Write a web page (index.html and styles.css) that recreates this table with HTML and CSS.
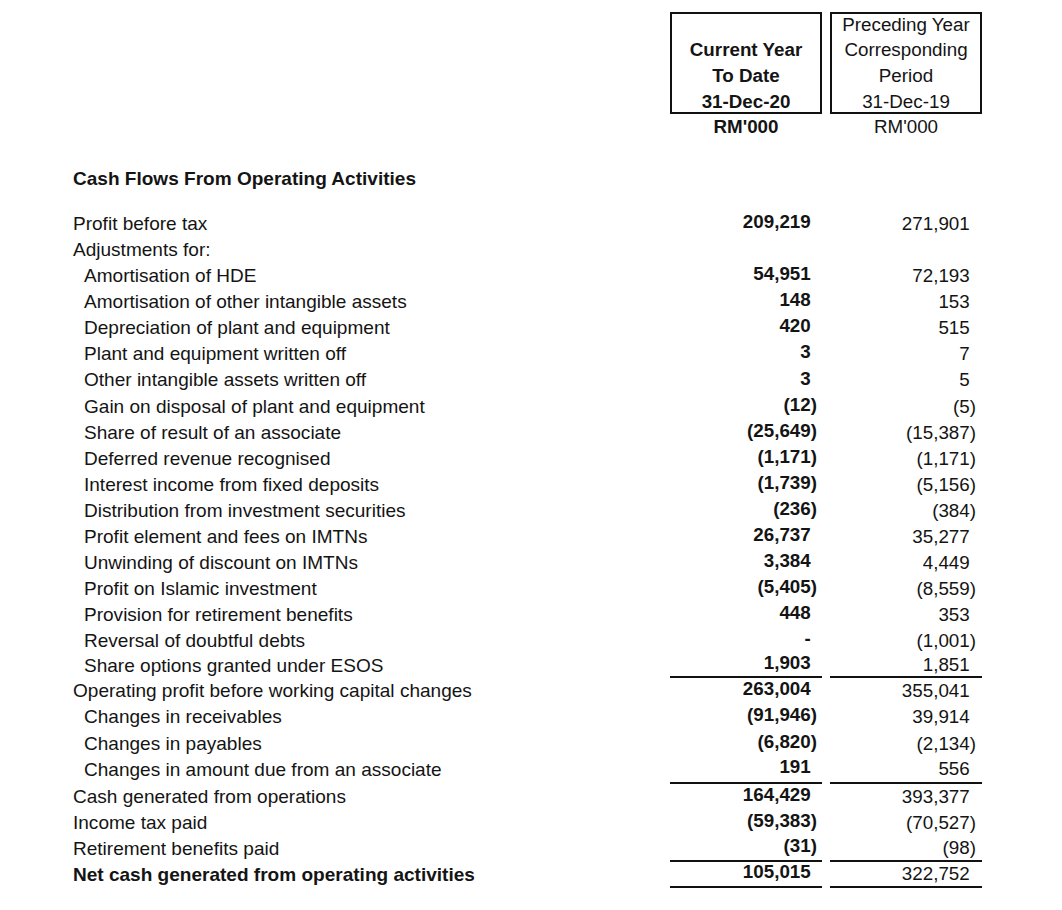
FILE: index.html
```html
<!DOCTYPE html>
<html lang="en">
<head>
<meta charset="utf-8">
<title>Cash Flows From Operating Activities</title>
<link rel="stylesheet" href="styles.css">
</head>
<body>
<div class="sheet">
  <div class="grid head">
    <div></div>
    <div class="box bold">
      <div class="box-in"><span>Current Year</span><span>To Date</span><span>31-Dec-20</span></div>
    </div>
    <div class="box">
      <div class="box-in"><span>Preceding Year</span><span>Corresponding</span><span>Period</span><span>31-Dec-19</span></div>
    </div>
  </div>
  <div class="grid unit">
    <div></div>
    <div class="bold center">RM'000</div>
    <div class="center">RM'000</div>
  </div>

  <div class="grid heading">
    <div class="bold lab">Cash Flows From Operating Activities</div>
  </div>

  <div class="rows">
    <div class="grid row"><div class="lab">Profit before tax</div><div class="c1 pos">209,219</div><div class="c2 pos">271,901</div></div>
    <div class="grid row"><div class="lab">Adjustments for:</div><div class="c1"></div><div class="c2"></div></div>
    <div class="grid row"><div class="lab ind">Amortisation of HDE</div><div class="c1 pos">54,951</div><div class="c2 pos">72,193</div></div>
    <div class="grid row"><div class="lab ind">Amortisation of other intangible assets</div><div class="c1 pos">148</div><div class="c2 pos">153</div></div>
    <div class="grid row"><div class="lab ind">Depreciation of plant and equipment</div><div class="c1 pos">420</div><div class="c2 pos">515</div></div>
    <div class="grid row"><div class="lab ind">Plant and equipment written off</div><div class="c1 pos">3</div><div class="c2 pos">7</div></div>
    <div class="grid row"><div class="lab ind">Other intangible assets written off</div><div class="c1 pos">3</div><div class="c2 pos">5</div></div>
    <div class="grid row"><div class="lab ind">Gain on disposal of plant and equipment</div><div class="c1">(12)</div><div class="c2">(5)</div></div>
    <div class="grid row"><div class="lab ind">Share of result of an associate</div><div class="c1">(25,649)</div><div class="c2">(15,387)</div></div>
    <div class="grid row"><div class="lab ind">Deferred revenue recognised</div><div class="c1">(1,171)</div><div class="c2">(1,171)</div></div>
    <div class="grid row"><div class="lab ind">Interest income from fixed deposits</div><div class="c1">(1,739)</div><div class="c2">(5,156)</div></div>
    <div class="grid row"><div class="lab ind">Distribution from investment securities</div><div class="c1">(236)</div><div class="c2">(384)</div></div>
    <div class="grid row"><div class="lab ind">Profit element and fees on IMTNs</div><div class="c1 pos">26,737</div><div class="c2 pos">35,277</div></div>
    <div class="grid row"><div class="lab ind">Unwinding of discount on IMTNs</div><div class="c1 pos">3,384</div><div class="c2 pos">4,449</div></div>
    <div class="grid row"><div class="lab ind">Profit on Islamic investment</div><div class="c1">(5,405)</div><div class="c2">(8,559)</div></div>
    <div class="grid row"><div class="lab ind">Provision for retirement benefits</div><div class="c1 pos">448</div><div class="c2 pos">353</div></div>
    <div class="grid row"><div class="lab ind">Reversal of doubtful debts</div><div class="c1 pos">-</div><div class="c2">(1,001)</div></div>
    <div class="grid row rule short"><div class="lab ind">Share options granted under ESOS</div><div class="c1 pos">1,903</div><div class="c2 pos">1,851</div></div>
    <div class="grid row"><div class="lab">Operating profit before working capital changes</div><div class="c1 pos">263,004</div><div class="c2 pos">355,041</div></div>
    <div class="grid row"><div class="lab ind">Changes in receivables</div><div class="c1">(91,946)</div><div class="c2 pos">39,914</div></div>
    <div class="grid row"><div class="lab ind">Changes in payables</div><div class="c1">(6,820)</div><div class="c2">(2,134)</div></div>
    <div class="grid row rule tall"><div class="lab ind">Changes in amount due from an associate</div><div class="c1 pos">191</div><div class="c2 pos">556</div></div>
    <div class="grid row"><div class="lab">Cash generated from operations</div><div class="c1 pos">164,429</div><div class="c2 pos">393,377</div></div>
    <div class="grid row"><div class="lab">Income tax paid</div><div class="c1">(59,383)</div><div class="c2">(70,527)</div></div>
    <div class="grid row rule"><div class="lab">Retirement benefits paid</div><div class="c1">(31)</div><div class="c2">(98)</div></div>
    <div class="grid row rule"><div class="lab bold">Net cash generated from operating activities</div><div class="c1 pos">105,015</div><div class="c2 pos">322,752</div></div>
  </div>
</div>
</body>
</html>
```

FILE: styles.css
```css
html, body {
  margin: 0;
  padding: 0;
  background: #ffffff;
}

body {
  font-family: "Liberation Sans", Arial, Helvetica, sans-serif;
  font-size: 18.8px;
  color: #141414;
}

.sheet {
  padding: 12px 0 0 73px;
  width: 909px;
}

.grid {
  display: grid;
  grid-template-columns: 589px 152px 152px;
  column-gap: 8px;
}

.bold {
  font-weight: bold;
}

.center {
  text-align: center;
}

/* header boxes */
.head {
  height: 102px;
}

.box {
  box-sizing: border-box;
  height: 102px;
  border: 2px solid #111;
  display: flex;
  flex-direction: column;
  justify-content: flex-end;
  text-align: center;
  line-height: 25.7px;
}

.box-in {
  display: flex;
  flex-direction: column;
  margin-bottom: -2.4px;
}

.unit {
  line-height: 25.7px;
  height: 25.7px;
}

.heading {
  margin-top: 26.3px;
  height: 26px;
  line-height: 26px;
}

.rows {
  margin-top: 19px;
}

.row {
  height: 26.08px;
  line-height: 26px;
}

.row > div {
  box-sizing: border-box;
  height: 26.08px;
  display: flex;
  align-items: center;
}

.row.short,
.row.short > div {
  height: 24px;
}

.row.tall,
.row.tall > div {
  height: 27px;
}

.lab {
  white-space: nowrap;
  font-size: 19.05px;
}

.ind {
  padding-left: 11px;
}

.c1,
.c2 {
  justify-content: flex-end;
  white-space: nowrap;
}

.c1 {
  font-weight: bold;
  padding-right: 5px;
  padding-bottom: 4px;
}

.c2 {
  padding-right: 6px;
}

.pos::after {
  content: ")";
  visibility: hidden;
}

.rule .c1,
.rule .c2 {
  border-bottom: 2px solid #111;
}
```
